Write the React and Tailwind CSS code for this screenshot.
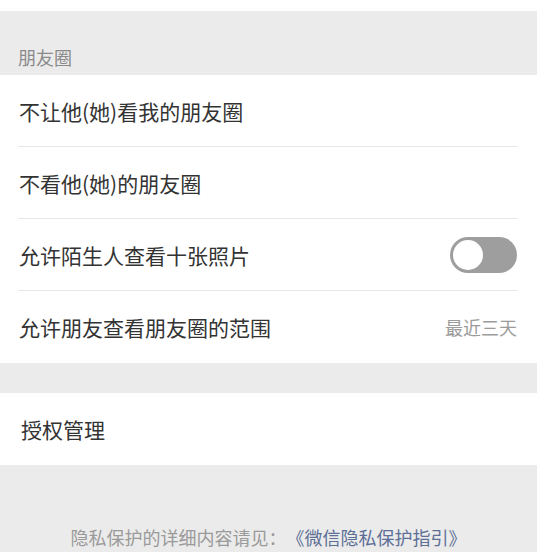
import React from "react";

const font = { fontFamily: '"Noto Sans CJK SC", "Noto Sans", sans-serif' };

function Row({ children, right, last }) {
  return (
    <div className="relative h-[72px] flex items-center justify-between pl-[19px] pr-[20px]">
      <span className="text-[21px] leading-[28px] text-[#333333]">{children}</span>
      {right}
      {!last && (
        <div className="absolute left-[18px] right-[20px] bottom-0 h-px bg-[#e6e6e6]" />
      )}
    </div>
  );
}

export default function App() {
  return (
    <div className="w-[537px] h-[552px] bg-[#ebebeb] overflow-hidden [text-spacing-trim:space-all]" style={font}>
      <div className="h-[11px] bg-white" />
      <div className="h-[64px] pt-[34px] pl-[18px]">
        <span className="text-[18px] leading-[24px] text-[#8a8a8a]">朋友圈</span>
      </div>
      <div className="bg-white">
        <Row>不让他(她)看我的朋友圈</Row>
        <Row>不看他(她)的朋友圈</Row>
        <Row
          right={
            <div className="w-[67px] h-[36px] rounded-full bg-[#9e9e9e] flex items-center pl-[3px]">
              <div className="w-[30px] h-[30px] rounded-full bg-white" />
            </div>
          }
        >
          允许陌生人查看十张照片
        </Row>
        <Row
          last
          right={<span className="text-[18px] leading-[24px] text-[#9b9b9b]">最近三天</span>}
        >
          允许朋友查看朋友圈的范围
        </Row>
      </div>
      <div className="h-[30px]" />
      <div className="bg-white">
        <div className="h-[72px] flex items-center pl-[21px]">
          <span className="text-[21px] leading-[28px] text-[#333333]">授权管理</span>
        </div>
      </div>
      <div className="pt-[60px] flex justify-center">
        <span className="text-[18px] leading-[24px] text-[#9a9a9a] whitespace-nowrap">
          隐私保护的详细内容请见：<span className="text-[#5d6f96]">《微信隐私保护指引》</span>
        </span>
      </div>
    </div>
  );
}
